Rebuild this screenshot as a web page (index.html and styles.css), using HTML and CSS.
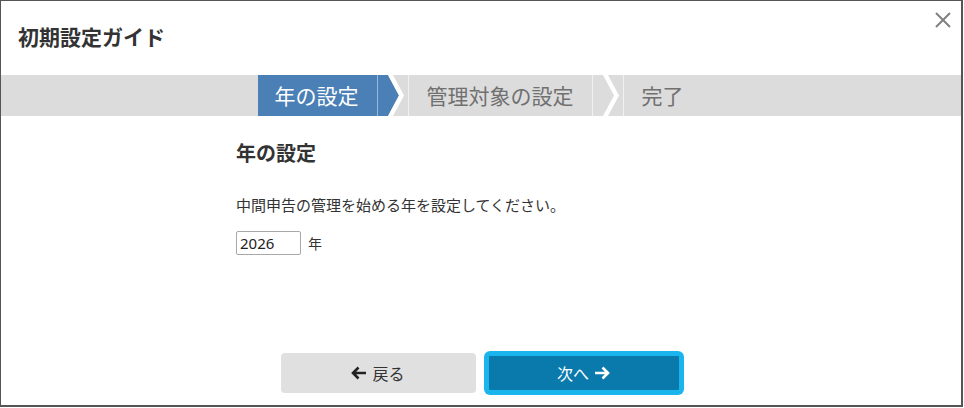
FILE: index.html
```html
<!DOCTYPE html>
<html lang="ja">
<head>
    <meta charset="UTF-8">
    <meta name="viewport" content="width=device-width, initial-scale=1.0">
    <title>初期設定ガイド</title>
    <link rel="stylesheet" href="styles.css">
</head>
<body>
    <div class="dialog">
        <header class="dialog-header">
            <h1>初期設定ガイド</h1>
            <button class="close-btn" aria-label="閉じる">
                <svg width="16" height="16" viewBox="0 0 16 16">
                    <path d="M1 1 L15 15 M15 1 L1 15" stroke="#808080" stroke-width="2" fill="none"/>
                </svg>
            </button>
        </header>

        <div class="stepper">
            <div class="step active">年の設定</div>
            <svg class="step-arrow" width="30" height="41" viewBox="0 0 30 41">
                <polygon points="0,0 10,0 21,20.5 10,41 0,41" fill="#4a80b6"/>
                <polygon points="10,0 15,0 26,20.5 15,41 10,41 21,20.5" fill="#ffffff"/>
            </svg>
            <div class="step">管理対象の設定</div>
            <svg class="step-arrow" width="30" height="41" viewBox="0 0 30 41">
                <polygon points="10,0 15,0 26,20.5 15,41 10,41 21,20.5" fill="#ffffff"/>
            </svg>
            <div class="step last">完了</div>
        </div>

        <div class="content">
            <h2>年の設定</h2>
            <p>中間申告の管理を始める年を設定してください。</p>
            <div class="year-row">
                <input type="text" class="year-input" value="2026">
                <span>年</span>
            </div>
        </div>

        <footer class="dialog-footer">
            <button class="btn btn-back">
                <svg width="16" height="14" viewBox="0 0 16 14">
                    <path d="M7.5 1.5 L2 7 L7.5 12.5 M2.5 7 H15" stroke="#222" stroke-width="2.6" fill="none"/>
                </svg>
                戻る
            </button>
            <button class="btn btn-next">
                次へ
                <svg width="16" height="14" viewBox="0 0 16 14">
                    <path d="M8.5 1.5 L14 7 L8.5 12.5 M13.5 7 H1" stroke="#ffffff" stroke-width="2.6" fill="none"/>
                </svg>
            </button>
        </footer>
    </div>
</body>
</html>
```

FILE: styles.css
```css
* {
    box-sizing: border-box;
}

body {
    margin: 0;
    padding: 0;
    background: #ffffff;
    font-family: "Noto Sans CJK JP", "Noto Sans", sans-serif;
    color: #333333;
}

.dialog {
    width: 963px;
    height: 407px;
    border: 1px solid #555555;
    border-right-width: 2px;
    border-bottom-width: 2px;
    display: flex;
    flex-direction: column;
}

.dialog-header {
    height: 74px;
    display: flex;
    align-items: center;
    justify-content: space-between;
    padding: 0 10px 4px 17px;
}

.dialog-header h1 {
    margin: 0;
    font-size: 21px;
    font-weight: bold;
    color: #333333;
}

.close-btn {
    align-self: flex-start;
    margin-top: 11px;
    background: none;
    border: none;
    padding: 0;
    cursor: pointer;
}

.stepper {
    height: 41px;
    background: #dcdcdc;
    display: flex;
    justify-content: center;
    padding-right: 3px;
}

.step {
    height: 41px;
    line-height: 41px;
    padding: 0 18px;
    font-size: 21px;
    color: #707070;
    border-left: 1px solid rgba(255, 255, 255, 0.6);
    border-right: 1px solid rgba(255, 255, 255, 0.6);
}

.step.active {
    background: #4a80b6;
    color: #ffffff;
    border-left: none;
    border-right-color: rgba(255, 255, 255, 0.45);
    padding-left: 17px;
}

.step.last {
    border-right: none;
}

.step-arrow {
    display: block;
    flex-shrink: 0;
}

.content {
    width: 490px;
    margin: 0 auto;
    padding-top: 21px;
}

.content h2 {
    margin: 0;
    font-size: 20px;
    font-weight: bold;
    line-height: 31px;
    color: #333333;
}

.content p {
    margin: 26px 0 0;
    font-size: 15px;
    line-height: 22px;
}

.year-row {
    margin-top: 15px;
    display: flex;
    align-items: center;
    gap: 7px;
    font-size: 14px;
}

.year-input {
    width: 65px;
    height: 24px;
    border: 1px solid #a8a8a8;
    border-radius: 2px;
    padding: 0 3px;
    font-family: "Noto Sans", sans-serif;
    font-size: 15px;
    color: #222222;
}

.dialog-footer {
    margin-top: auto;
    padding-bottom: 12px;
    display: flex;
    justify-content: center;
    align-items: center;
    gap: 10px;
}

.btn {
    width: 195px;
    height: 40px;
    border-radius: 4px;
    font-family: "Noto Sans CJK JP", sans-serif;
    font-size: 16px;
    display: flex;
    align-items: center;
    justify-content: center;
    gap: 5px;
    cursor: pointer;
}

.btn-back {
    background: #e0e0e0;
    border: none;
    color: #333333;
}

.btn-next {
    background: #0a7aad;
    color: #ffffff;
    border: 3px solid #19b5ec;
    box-shadow: 0 0 0 2px #19b5ec;
    width: 196px;
}
```
